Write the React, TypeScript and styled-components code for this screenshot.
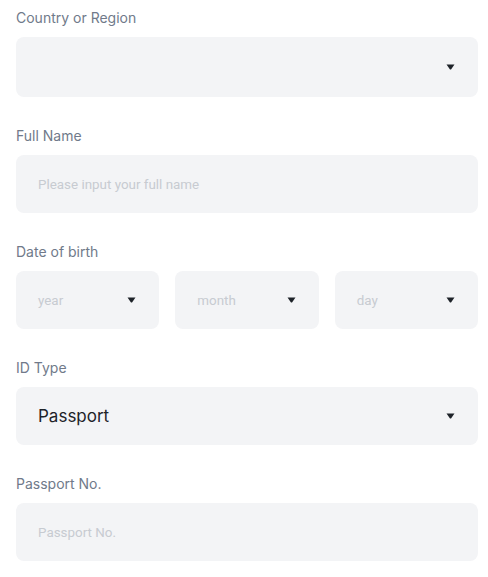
import styled, { createGlobalStyle } from "styled-components";

const GlobalStyle = createGlobalStyle`
  body {
    margin: 0;
    background: #ffffff;
    font-family: Inter, "Noto Sans", Roboto, sans-serif;
  }
`;

const Form = styled.form`
  width: 462px;
  padding: 8px 16px 0;
  display: flex;
  flex-direction: column;
`;

const Field = styled.div`
  display: flex;
  flex-direction: column;
  margin-bottom: 29px;
`;

const Label = styled.label`
  font-size: 14px;
  line-height: 20px;
  color: #707a8a;
  margin-bottom: 9px;
`;

const Box = styled.div<{ $tall?: boolean }>`
  height: ${(p) => (p.$tall ? 60 : 58)}px;
  flex-shrink: 0;
  box-sizing: border-box;
  background: #f3f4f6;
  border-radius: 8px;
  padding: 0 23px 0 22px;
  display: flex;
  align-items: center;
  justify-content: space-between;
`;

const Placeholder = styled.span`
  font-family: Roboto, "Noto Sans", sans-serif;
  font-size: 13.4px;
  color: #c7cbd1;
`;

const Value = styled.span`
  font-size: 17px;
  color: #1e2329;
`;

const DateRow = styled.div`
  display: flex;
  gap: 16px;

  & > ${Box} {
    flex: 1 1 0;
  }
`;

const Caret = () => (
  <svg width="9" height="6" viewBox="0 0 9 6">
    <path d="M0.5 0.5h8L5 5.5h-1z" fill="#1e2329" />
  </svg>
);

const App = () => {
  return (
    <>
      <GlobalStyle />
      <Form>
        <Field>
          <Label>Country or Region</Label>
          <Box $tall>
            <span />
            <Caret />
          </Box>
        </Field>
        <Field>
          <Label>Full Name</Label>
          <Box>
            <Placeholder>Please input your full name</Placeholder>
          </Box>
        </Field>
        <Field>
          <Label>Date of birth</Label>
          <DateRow>
            <Box>
              <Placeholder>year</Placeholder>
              <Caret />
            </Box>
            <Box>
              <Placeholder>month</Placeholder>
              <Caret />
            </Box>
            <Box>
              <Placeholder>day</Placeholder>
              <Caret />
            </Box>
          </DateRow>
        </Field>
        <Field>
          <Label>ID Type</Label>
          <Box>
            <Value>Passport</Value>
            <Caret />
          </Box>
        </Field>
        <Field>
          <Label>Passport No.</Label>
          <Box>
            <Placeholder>Passport No.</Placeholder>
          </Box>
        </Field>
      </Form>
    </>
  );
};

export default App;
